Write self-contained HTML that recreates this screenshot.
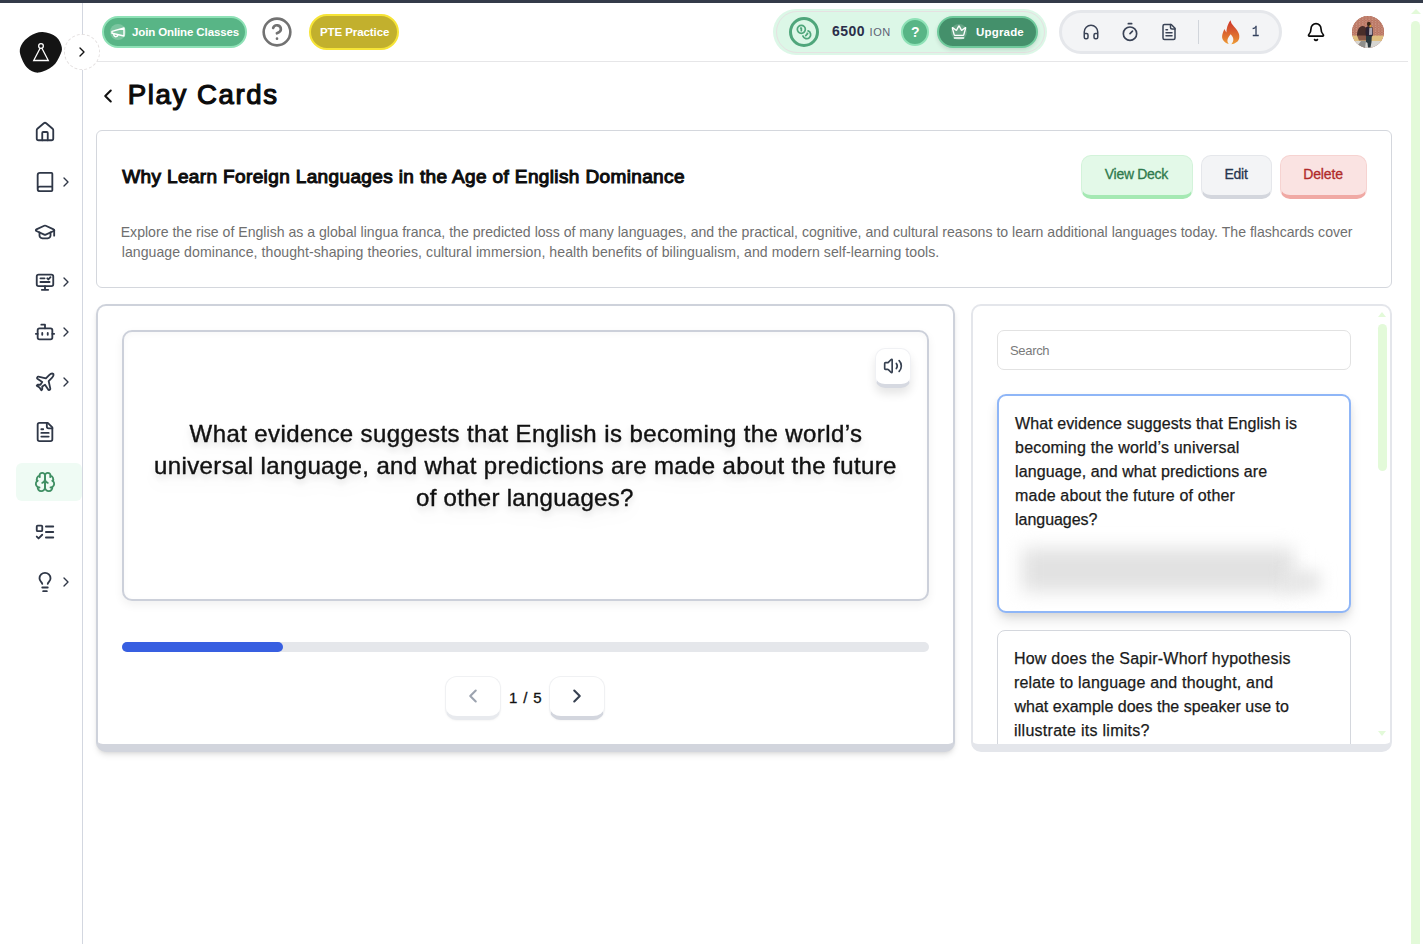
<!DOCTYPE html>
<html lang="en">
<head>
<meta charset="utf-8">
<title>Play Cards</title>
<style>
*{box-sizing:border-box;margin:0;padding:0}
html,body{width:1423px;height:944px;overflow:hidden;background:#fff}
body{position:relative;font-family:"Liberation Sans",sans-serif;color:#111}
.abs{position:absolute}
.t{position:absolute;white-space:nowrap;line-height:1}
svg{display:block;overflow:visible}
.ic{position:absolute;fill:none;stroke:#2f3747;stroke-width:2;stroke-linecap:round;stroke-linejoin:round}
.chev{position:absolute;fill:none;stroke:#2f3747;stroke-width:2;stroke-linecap:round;stroke-linejoin:round;width:16px;height:16px}

/* chrome */
#topbar{left:0;top:0;width:1423px;height:3px;background:#343b49}
#sideline{left:82px;top:3px;width:1px;height:941px;background:#d3d7e0}
#hdrline{left:97px;top:61px;width:1311px;height:1px;background:#e6e6e8}

/* page scrollbar */
#sb-thumb{left:1411px;top:21px;width:9px;height:940px;border-radius:5px;background:#e3fad9}
#sb-up{left:1410.5px;top:9px;width:0;height:0;border-left:5px solid transparent;border-right:5px solid transparent;border-bottom:5px solid #e3fad9}

/* sidebar */
#logo{left:20px;top:32px;width:42px;height:41px}
#toggle{left:64px;top:34px;width:36px;height:36px;border-radius:50%;background:#fff;border:1px dashed #e4e0e0}
#active{left:16px;top:463px;width:66px;height:38px;border-radius:6px;background:#effbf4}

/* topbar */
#join{left:102px;top:16px;width:145px;height:32px;border-radius:16px;background:#58b586;border:2px solid #8fe2b7}
#joinic-bg{left:110px;top:24px;width:16px;height:16px;border-radius:50%;background:rgba(255,255,255,.22)}
#help{left:262px;top:17px;width:30px;height:30px;border-radius:50%;border:2.5px solid #727272}
#pte{left:309px;top:14px;width:90px;height:36px;border-radius:18px;background:#c2b02d;border:2px solid #f6e437}
#ion{left:773px;top:9px;width:274px;height:46px;border-radius:23px;background:#dcf7e7}
#ion-in{left:776px;top:11px;width:269px;height:42px;border-radius:21px;border:1px solid #e6e1e2}
#coin{left:789px;top:17px;width:30px;height:30px;border-radius:50%;border:3px solid #4fa67b}
#ionq{left:901px;top:18px;width:28px;height:28px;border-radius:50%;background:#58b586;border:2px solid #8fe2b7}
#upg{left:937px;top:16px;width:101px;height:32px;border-radius:16px;background:#44906b;border:2px solid #6fca9c;box-shadow:0 2px 4px rgba(0,0,0,.12)}
#upgic-bg{left:951px;top:24px;width:16px;height:16px;border-radius:50%;background:rgba(255,255,255,.18)}
#tools{left:1059px;top:10px;width:223px;height:44px;border-radius:22px;background:#f3f4f6;border:3px solid #e5e7eb}
#tdiv{left:1198px;top:20px;width:1px;height:24px;background:#d1d5db}
#avatar{left:1352px;top:16px;width:32px;height:32px;border-radius:50%;overflow:hidden;background:#a86553}

/* main */
#deck{left:96px;top:130px;width:1296px;height:158px;border:1px solid #d4d7dd;border-radius:6px;background:#fff}
.btn{position:absolute;top:155px;height:44px;border-radius:10px;border-style:solid;border-width:1px 1px 4px 1px}
#b-view{left:1081px;width:112px;background:#e3f9e8;border-color:#d3f3da #d3f3da #a5e9b3 #d3f3da}
#b-edit{left:1201px;width:71px;background:#f3f4f6;border-color:#e5e7eb #e5e7eb #d3d6dd #e5e7eb}
#b-del{left:1280px;width:87px;background:#fae3e2;border-color:#f6d3d1 #f6d3d1 #f0a9a4 #f6d3d1}
#panel{left:96px;top:304px;width:859px;height:448px;border:2px solid #ced2db;border-bottom-width:8px;border-bottom-color:#d2d5dd;border-radius:10px;background:#fff;box-shadow:0 4px 6px -1px rgba(0,0,0,.10),0 2px 4px -2px rgba(0,0,0,.10)}
#card{left:122px;top:330px;width:807px;height:271px;border:2px solid #ccd0da;border-radius:10px;background:#fff;box-shadow:0 4px 10px rgba(0,0,0,.06), inset 0 2px 6px rgba(0,0,0,.03)}
#snd{left:875px;top:348px;width:36px;height:40px;border-radius:10px;background:#fff;border:1px solid #f0f1f4;border-bottom:4px solid #d6d9e1;box-shadow:0 6px 10px rgba(0,0,0,.10)}
.q{position:absolute;white-space:nowrap;line-height:1;font-size:24px;color:#111;-webkit-text-stroke:0.4px #111;filter:drop-shadow(0 10px 8px rgba(0,0,0,.04)) drop-shadow(0 4px 3px rgba(0,0,0,.12))}
#prog{left:122px;top:642px;width:807px;height:10px;border-radius:5px;background:#e5e7eb}
#progf{left:122px;top:642px;width:161px;height:10px;border-radius:5px;background:#385fe1}
.nav{position:absolute;top:676px;width:56px;height:44px;border-radius:12px;background:#fff;border:1px solid #f0f1f3;border-bottom:4px solid #d3d6de;box-shadow:0 1px 2px rgba(0,0,0,.04)}
#rpanel{left:971px;top:304px;width:421px;height:448px;border:2px solid #e4e6eb;border-bottom-width:8px;border-radius:10px;background:#fff;overflow:hidden}
#search{left:997px;top:330px;width:354px;height:40px;border:1px solid #e2e2e2;border-radius:7px;background:#fff}
#sel{left:997px;top:394px;width:354px;height:219px;border:2px solid #8fb6f7;border-radius:9px;background:#fff;box-shadow:0 8px 14px -2px rgba(0,0,0,.13),0 3px 6px rgba(0,0,0,.06)}
#c2{left:997px;top:630px;width:354px;height:130px;border:1px solid #d4d7dd;border-radius:8px;background:#fff}
.li{position:absolute;white-space:nowrap;line-height:1;font-size:15px;color:#1a1a1a;-webkit-text-stroke:0.25px #1a1a1a}
#rp-clip{left:973px;top:306px;width:417px;height:438px;overflow:hidden}
#isb-thumb{left:1378px;top:324px;width:9px;height:147px;border-radius:5px;background:#e3fad9}
#isb-up{left:1378px;top:312px;width:0;height:0;border-left:4.5px solid transparent;border-right:4.5px solid transparent;border-bottom:5px solid #e3fad9}
#isb-dn{left:1378px;top:731px;width:0;height:0;border-left:4.5px solid transparent;border-right:4.5px solid transparent;border-top:5px solid #e3fad9}
.blur{position:absolute;white-space:nowrap;line-height:1;font-size:15px;color:#555;filter:blur(5px)}
</style>
</head>
<body>
<div class="abs" id="topbar"></div>
<div class="abs" id="sideline"></div>
<div class="abs" id="hdrline"></div>
<div class="abs" id="sb-thumb"></div>
<div class="abs" id="sb-up"></div>

<!-- SIDEBAR -->
<div class="abs" id="active"></div>
<svg class="abs" id="logo" viewBox="0 0 42 41"><path d="M22.6 0.0C27.0 0.2 33.1 2.4 36.3 4.9C39.5 7.4 41.2 12.1 41.8 15.2C42.4 18.3 41.3 20.6 39.8 23.7C38.3 26.8 36.4 31.2 32.9 34.0C29.4 36.8 22.9 40.3 18.6 40.6C14.3 40.9 10.2 38.8 7.2 35.8C4.2 32.8 1.3 26.4 0.3 22.6C-0.7 18.8 -0.2 16.0 1.4 12.9C3.0 9.8 6.5 6.2 10.0 4.0C13.5 1.9 18.2 -0.2 22.6 0.0Z" fill="#141414"/><circle cx="21" cy="14" r="2.350" fill="none" stroke="#fff" stroke-width="1.3"/><path d="M20.100 16.300L13.700 28.500H28.300L21.900 16.300" fill="none" stroke="#fff" stroke-width="1.3" stroke-linejoin="miter"/></svg>
<div class="abs" id="toggle"></div>
<svg class="chev" style="left:74px;top:44px;stroke:#111" viewBox="0 0 24 24"><path d="m9 18 6-6-6-6"/></svg>

<!-- SIDEBAR-ICONS -->
<!-- home -->
<svg class="ic" style="left:34px;top:121px;width:22px;height:22px" viewBox="0 0 24 24"><path d="M15 21v-8a1 1 0 0 0-1-1h-4a1 1 0 0 0-1 1v8"/><path d="M3 10a2 2 0 0 1 .709-1.528l7-5.999a2 2 0 0 1 2.582 0l7 5.999A2 2 0 0 1 21 10v9a2 2 0 0 1-2 2H5a2 2 0 0 1-2-2z"/></svg>
<!-- book -->
<svg class="ic" style="left:34px;top:171px;width:22px;height:22px" viewBox="0 0 24 24"><path d="M4 19.5v-15A2.500 2.500 0 0 1 6.500 2H19a1 1 0 0 1 1 1v18a1 1 0 0 1-1 1H6.500a1 1 0 0 1 0-5H20"/></svg>
<svg class="chev" style="left:58px;top:174px" viewBox="0 0 24 24"><path d="m9 18 6-6-6-6"/></svg>
<!-- grad cap -->
<svg class="ic" style="left:34px;top:221px;width:22px;height:22px" viewBox="0 0 24 24"><path d="M21.420 10.922a1 1 0 0 0-.019-1.838L12.830 5.180a2 2 0 0 0-1.660 0L2.600 9.080a1 1 0 0 0 0 1.832l8.570 3.908a2 2 0 0 0 1.660 0z"/><path d="M22 10v6"/><path d="M6 12.500V16a6 3 0 0 0 12 0v-3.500"/></svg>
<!-- monitor -->
<svg class="ic" style="left:34px;top:271px;width:22px;height:22px" viewBox="0 0 24 24"><rect x="3" y="4" width="18" height="12.500" rx="2"/><path d="M12 16.500V20"/><path d="M8.500 20.500h7"/><path d="M7 8h4.500"/><path d="M14.500 8l1.200 1.200 2.300-2.400"/><path d="M7 12h10"/></svg>
<svg class="chev" style="left:58px;top:274px" viewBox="0 0 24 24"><path d="m9 18 6-6-6-6"/></svg>
<!-- bot -->
<svg class="ic" style="left:34px;top:321px;width:22px;height:22px" viewBox="0 0 24 24"><path d="M12 8V4H8"/><rect width="16" height="12" x="4" y="8" rx="2"/><path d="M2 14h2"/><path d="M20 14h2"/><path d="M15 13v2"/><path d="M9 13v2"/></svg>
<svg class="chev" style="left:58px;top:324px" viewBox="0 0 24 24"><path d="m9 18 6-6-6-6"/></svg>
<!-- plane -->
<svg class="ic" style="left:34px;top:371px;width:22px;height:22px" viewBox="0 0 24 24"><path d="M17.800 19.200 16 11l3.500-3.500C21 6 21.500 4 21 3c-1-.5-3 0-4.500 1.500L13 8 4.800 6.200c-.5-.1-.9.100-1.100.500l-.3.500c-.2.500-.1 1 .3 1.300L9 12l-2 3H4l-1 1 3 2 2 3 1-1v-3l3-2 3.500 5.300c.3.400.8.500 1.300.300l.5-.2c.4-.3.600-.7.500-1.200z"/></svg>
<svg class="chev" style="left:58px;top:374px" viewBox="0 0 24 24"><path d="m9 18 6-6-6-6"/></svg>
<!-- file-text -->
<svg class="ic" style="left:34px;top:421px;width:22px;height:22px" viewBox="0 0 24 24"><path d="M15 2H6a2 2 0 0 0-2 2v16a2 2 0 0 0 2 2h12a2 2 0 0 0 2-2V7Z"/><path d="M14 2v4a2 2 0 0 0 2 2h4"/><path d="M10 9H8"/><path d="M16 13H8"/><path d="M16 17H8"/></svg>
<!-- brain -->
<svg class="ic" style="left:34px;top:471px;width:22px;height:22px;stroke:#3f8f63" viewBox="0 0 24 24"><path d="M12 5a3 3 0 1 0-5.997.125 4 4 0 0 0-2.526 5.770 4 4 0 0 0 .556 6.588A4 4 0 1 0 12 18Z"/><path d="M12 5a3 3 0 1 1 5.997.125 4 4 0 0 1 2.526 5.770 4 4 0 0 1-.556 6.588A4 4 0 1 1 12 18Z"/><path d="M15 13a4.500 4.500 0 0 1-3-4 4.500 4.500 0 0 1-3 4"/><path d="M17.599 6.500a3 3 0 0 0 .399-1.375"/><path d="M6.003 5.125A3 3 0 0 0 6.401 6.500"/><path d="M3.477 10.896a4 4 0 0 1 .585-.396"/><path d="M19.938 10.500a4 4 0 0 1 .585.396"/><path d="M6 18a4 4 0 0 1-1.967-.516"/><path d="M19.967 17.484A4 4 0 0 1 18 18"/></svg>
<!-- list-todo -->
<svg class="ic" style="left:34px;top:521px;width:22px;height:22px" viewBox="0 0 24 24"><rect x="3" y="5" width="6" height="6" rx="1"/><path d="m3 17 2 2 4-4"/><path d="M13 6h8"/><path d="M13 12h8"/><path d="M13 18h8"/></svg>
<!-- bulb -->
<svg class="ic" style="left:34px;top:571px;width:22px;height:22px" viewBox="0 0 24 24"><path d="M15 14c.2-1 .7-1.700 1.500-2.500 1-.9 1.500-2.200 1.500-3.500A6 6 0 0 0 6 8c0 1 .2 2.200 1.500 3.500.7.700 1.300 1.500 1.500 2.500"/><path d="M9 18h6"/><path d="M10 22h4"/></svg>
<svg class="chev" style="left:58px;top:574px" viewBox="0 0 24 24"><path d="m9 18 6-6-6-6"/></svg>


<!-- TOPBAR -->
<div class="abs" id="join"></div>
<div class="abs" id="joinic-bg"></div>
<svg class="ic" style="left:110px;top:24px;width:16px;height:16px;stroke:#fff;stroke-width:2.2" viewBox="0 0 24 24"><path d="m3 11 18-5v12L3 14v-3z"/><path d="M11.600 16.800a3 3 0 1 1-5.800-1.600"/></svg>
<div class="t" id="t-join" style="left:132px;top:27px;font-size:11.5px;letter-spacing:-0.12px;font-weight:700;color:#fff">Join Online Classes</div>
<svg class="ic" style="left:261px;top:16px;width:32px;height:32px;stroke:#727272;stroke-width:1.95" viewBox="0 0 24 24"><circle cx="12" cy="12" r="10"/><path d="M9.090 9a3 3 0 0 1 5.830 1c0 2-3 3-3 3"/><path d="M12 17h.01"/></svg>
<div class="abs" id="pte"></div>
<div class="t" id="t-pte" style="left:320px;top:27px;font-size:11.5px;letter-spacing:-0.08px;font-weight:700;color:#fff">PTE Practice</div>

<div class="abs" id="ion"></div>
<div class="abs" id="ion-in"></div>
<div class="abs" id="coin"></div>
<svg class="ic" style="left:796px;top:24px;width:16px;height:16px;stroke:#4fa67b;stroke-width:2.6" viewBox="0 0 24 24"><circle cx="8" cy="8" r="6"/><path d="M18.090 10.370A6 6 0 1 1 10.340 18"/><path d="M7 6h1v4"/><path d="m16.710 13.880.7.710-2.820 2.820"/></svg>
<div class="t" id="t-6500" style="left:832px;top:24px;font-size:14px;letter-spacing:0.45px;font-weight:700;color:#2b2f4a">6500</div>
<div class="t" id="t-ion" style="left:869.5px;top:27px;font-size:11px;letter-spacing:0.6px;color:#5d6275">ION</div>
<div class="abs" id="ionq"></div>
<div class="t" id="t-ionq" style="left:911px;top:25px;font-size:14px;font-weight:700;color:#fff">?</div>
<div class="abs" id="upg"></div>
<div class="abs" id="upgic-bg"></div>
<svg class="ic" style="left:951px;top:24px;width:16px;height:16px;stroke:#fff" viewBox="0 0 24 24"><path d="M11.562 3.266a.5.5 0 0 1 .876 0L15.390 8.870a1 1 0 0 0 1.516.294L21.183 5.500a.5.5 0 0 1 .798.519l-2.834 10.246a1 1 0 0 1-.956.734H5.810a1 1 0 0 1-.957-.734L2.020 6.020a.5.5 0 0 1 .798-.519l4.276 3.664a1 1 0 0 0 1.516-.294z"/><path d="M5 21h14"/></svg>
<div class="t" id="t-upg" style="left:976px;top:27px;font-size:11.5px;letter-spacing:0.18px;font-weight:700;color:#fff">Upgrade</div>

<div class="abs" id="tools"></div>
<svg class="ic" style="left:1082px;top:23px;width:18px;height:18px;stroke:#3a4356" viewBox="0 0 24 24"><path d="M3 14h3a2 2 0 0 1 2 2v3a2 2 0 0 1-2 2H5a2 2 0 0 1-2-2v-7a9 9 0 0 1 18 0v7a2 2 0 0 1-2 2h-1a2 2 0 0 1-2-2v-3a2 2 0 0 1 2-2h3"/></svg>
<svg class="ic" style="left:1120px;top:22px;width:20px;height:20px;stroke:#3a4356" viewBox="0 0 24 24"><line x1="10" x2="14" y1="2" y2="2"/><line x1="12" x2="15" y1="14" y2="11"/><circle cx="12" cy="14" r="8"/></svg>
<svg class="ic" style="left:1160px;top:23px;width:18px;height:18px;stroke:#3a4356" viewBox="0 0 24 24"><path d="M15 2H6a2 2 0 0 0-2 2v16a2 2 0 0 0 2 2h12a2 2 0 0 0 2-2V7Z"/><path d="M14 2v4a2 2 0 0 0 2 2h4"/><path d="M10 9H8"/><path d="M16 13H8"/><path d="M16 17H8"/></svg>
<div class="abs" id="tdiv"></div>
<svg class="abs" id="flame" style="left:1221.9px;top:19.8px;width:17.4px;height:24.4px" viewBox="0 0 17.4 24.4"><defs><linearGradient id="fg" x1="0" y1="0" x2="0" y2="1"><stop offset="0" stop-color="#cf3529"/><stop offset=".4" stop-color="#d7582f"/><stop offset=".75" stop-color="#e27a31"/><stop offset="1" stop-color="#ef9f36"/></linearGradient></defs><path d="M8.500 0.200 C9 2 9.500 3.300 10.400 4.600 C11.300 5.900 12.600 7.100 13.700 8.400 C14.700 9.600 15.600 10.900 16.200 12.200 C16.900 13.500 17.400 14.800 17.300 16.200 C17.300 17.400 17.300 18.400 16.800 19.400 C16.300 20.600 15.500 21.600 14.400 22.300 C13.600 22.900 12.800 23.400 11.900 23.700 C11 24 10.200 24.100 9.300 24.200 C9.900 23.400 10.600 22.500 11 21.400 C11.300 20.400 11.500 19.400 11.200 18.400 C11 17.600 10.700 17 10.200 16.300 C9.800 15.600 9.200 14.900 8.700 14.200 C8 15 7.300 15.800 6.800 16.700 C6.200 17.700 5.700 18.600 5.500 19.700 C5.300 20.600 5.400 21.400 5.700 22.200 C5.900 22.800 6.300 23.300 6.800 23.800 C6.200 23.800 5.600 23.700 5.100 23.500 C4.100 23.100 3.200 22.500 2.500 21.800 C1.700 21.100 1 20.200 0.600 19.300 C0.200 18.300 0 17.300 0.100 16.300 C0.100 15.100 0.400 14 0.800 12.900 C1.200 11.600 1.800 10.400 2.500 9.100 C3 10.400 3.600 11.600 4.400 12.500 C4.400 11.100 4.500 9.700 4.900 8.300 C5.200 6.900 5.500 5.600 6.100 4.400 C6.700 2.900 7.500 1.500 8.500 0.200 Z" fill="url(#fg)"/></svg>
<div class="t" id="t-one" style="transform:scaleX(.8);left:1250.6px;top:25px;font-size:15px;font-family:'Liberation Mono',monospace;color:#33405e;-webkit-text-stroke:0.3px #33405e">1</div>
<svg class="ic" style="left:1306px;top:22px;width:20px;height:20px;stroke:#0a0a0a" viewBox="0 0 24 24"><path d="M10.268 21a2 2 0 0 0 3.464 0"/><path d="M3.262 15.326A1 1 0 0 0 4 17h16a1 1 0 0 0 .74-1.673C19.410 13.956 18 12.499 18 8A6 6 0 0 0 6 8c0 4.499-1.411 5.956-2.738 7.326"/></svg>
<div class="abs" id="avatar"><svg width="32" height="32" viewBox="0 0 32 32"><defs><filter id="avb" x="-10%" y="-10%" width="120%" height="120%"><feGaussianBlur stdDeviation="0.55"/></filter><pattern id="brk" width="3.2" height="2.4" patternUnits="userSpaceOnUse"><rect width="3.2" height="2.4" fill="#b8705d"/><rect x="0.4" y="0.3" width="1.5" height="1" fill="#d7ab9a"/><rect x="2" y="1.5" width="1" height=".7" fill="#cf9c8b"/></pattern></defs><g filter="url(#avb)"><rect x="-2" y="-2" width="36" height="23" fill="url(#brk)"/><rect x="-2" y="19.600" width="36" height="6" fill="#e0c080"/><rect x="-2" y="25" width="36" height="9" fill="#d6d5d1"/><path d="M4 32L9 25L14 25L13 32Z" fill="#8f8f8b"/><path d="M5 20C5 13 8 9.500 11 10C13 10.300 14.500 12 14.500 14L14.500 20Z" fill="#4a2d2b"/><path d="M5 19.600H14.500V24.500H7Z" fill="#8a5a48"/><path d="M14 11.500C15 9.800 19 9.800 20.500 11.500L21 19L20 20.500L14 20.500L13.500 16Z" fill="#2b2230"/><path d="M17.300 12L20 11.500L20.300 18.800L17 19Z" fill="#aaa5b2"/><path d="M14 20L19.800 20L19.500 26L18.500 31.500L16 31.500L15.500 27L14 26Z" fill="#2c373c"/><ellipse cx="16.800" cy="8" rx="1.900" ry="2.300" fill="#3a2616"/><path d="M17.500 9.200L19.300 8.800L19.300 11.300L17.500 11.500Z" fill="#d9a32a"/></g></svg></div>


<!-- MAIN -->
<svg class="ic" style="left:97px;top:85px;width:22px;height:22px;stroke:#111;stroke-width:2.3" viewBox="0 0 24 24"><path d="m15 18-6-6 6-6"/></svg>
<div class="t" id="t-title" style="left:127.70px;top:81.00px;font-size:27.6px;font-weight:400;-webkit-text-stroke:1.15px #0b0b0b;color:#0b0b0b;letter-spacing:1.605px">Play Cards</div>

<div class="abs" id="deck"></div>
<div class="t" id="t-deck" style="left:122.20px;top:167.00px;font-size:19px;font-weight:400;-webkit-text-stroke:1.05px #0d0d0d;color:#0d0d0d;letter-spacing:0.371px">Why Learn Foreign Languages in the Age of English Dominance</div>
<div class="t" id="t-d1" style="left:120.70px;top:225.00px;font-size:14.1px;color:#6f6f6f;letter-spacing:0.004px">Explore the rise of English as a global lingua franca, the predicted loss of many languages, and the practical, cognitive, and cultural reasons to learn additional languages today. The flashcards cover</div>
<div class="t" id="t-d2" style="left:121.70px;top:245.00px;font-size:14.1px;color:#6f6f6f;letter-spacing:0.058px">language dominance, thought-shaping theories, cultural immersion, health benefits of bilingualism, and modern self-learning tools.</div>
<div class="btn" id="b-view"></div><div class="btn" id="b-edit"></div><div class="btn" id="b-del"></div>
<div class="t" id="t-view" style="left:1104.80px;top:167.00px;font-size:14px;-webkit-text-stroke:0.3px #2f7a4d;color:#2f7a4d;letter-spacing:-0.297px">View Deck</div>
<div class="t" id="t-edit" style="left:1224.40px;top:167.00px;font-size:14px;-webkit-text-stroke:0.3px #27364f;color:#27364f;letter-spacing:-0.211px">Edit</div>
<div class="t" id="t-del" style="left:1303.20px;top:167.00px;font-size:14px;-webkit-text-stroke:0.3px #b02a2a;color:#b02a2a;letter-spacing:-0.137px">Delete</div>

<div class="abs" id="panel"></div>
<div class="abs" id="card"></div>
<div class="abs" id="snd"></div>
<svg class="ic" style="left:883px;top:356px;width:20px;height:20px;stroke:#374151" viewBox="0 0 24 24"><path d="M11 4.702a.705.705 0 0 0-1.203-.498L6.413 7.587A1.400 1.400 0 0 1 5.416 8H3a1 1 0 0 0-1 1v6a1 1 0 0 0 1 1h2.416a1.400 1.400 0 0 1 .997.413l3.383 3.384A.705.705 0 0 0 11 19.298z"/><path d="M16 9a5 5 0 0 1 0 6"/><path d="M19.364 18.364a9 9 0 0 0 0-12.728"/></svg>
<div class="q" id="q1" style="left:189.60px;top:422.00px;font-size:24px;letter-spacing:0.399px">What evidence suggests that English is becoming the world’s</div>
<div class="q" id="q2" style="left:154.00px;top:454.00px;font-size:24px;letter-spacing:0.378px">universal language, and what predictions are made about the future</div>
<div class="q" id="q3" style="left:416.00px;top:486.00px;font-size:24px;letter-spacing:0.288px">of other languages?</div>
<div class="abs" id="prog"></div><div class="abs" id="progf"></div>
<div class="nav" style="left:445px;border-bottom-color:#e8eaee"></div>
<div class="nav" style="left:549px"></div>
<svg class="ic" style="left:462px;top:685px;width:22px;height:22px;stroke:#9ca3af;stroke-width:2.3" viewBox="0 0 24 24"><path d="m15 18-6-6 6-6"/></svg>
<svg class="ic" style="left:566px;top:685px;width:22px;height:22px;stroke:#374151;stroke-width:2.3" viewBox="0 0 24 24"><path d="m9 18 6-6-6-6"/></svg>
<div class="t" id="t-pg" style="left:509.00px;top:690.00px;font-size:15px;-webkit-text-stroke:0.3px #111;color:#111;letter-spacing:0.864px">1 / 5</div>

<div class="abs" id="rpanel"></div>
<div class="abs" id="rp-clip"><div style="position:absolute;left:-973px;top:-306px;width:1423px;height:944px">
<div class="abs" id="search"></div>
<div class="t" id="t-search" style="left:1010.00px;top:344.00px;font-size:13px;color:#7a7a7a;letter-spacing:-0.332px">Search</div>
<div class="abs" id="sel"></div>
<div class="li" id="l1" style="left:1015.00px;top:416.00px;font-size:16px;letter-spacing:0.098px">What evidence suggests that English is</div>
<div class="li" id="l2" style="left:1015.10px;top:440.00px;font-size:16px;letter-spacing:0.199px">becoming the world’s universal</div>
<div class="li" id="l3" style="left:1015.10px;top:464.00px;font-size:16px;letter-spacing:0.089px">language, and what predictions are</div>
<div class="li" id="l4" style="left:1015.10px;top:488.00px;font-size:16px;letter-spacing:0.154px">made about the future of other</div>
<div class="li" id="l5" style="left:1015.10px;top:512.00px;font-size:16px;letter-spacing:-0.049px">languages?</div>
<div class="abs" style="left:1022px;top:548px;width:272px;height:44px;background:#e2e2e2;filter:blur(9px)"></div>
<div class="abs" style="left:1286px;top:571px;width:34px;height:21px;background:#e4e4e4;filter:blur(8px)"></div>
<div class="abs" id="c2"></div>
<div class="li" id="m1" style="left:1013.90px;top:651.00px;font-size:16px;letter-spacing:0.236px">How does the Sapir-Whorf hypothesis</div>
<div class="li" id="m2" style="left:1013.90px;top:675.00px;font-size:16px;letter-spacing:0.195px">relate to language and thought, and</div>
<div class="li" id="m3" style="left:1014.40px;top:699.00px;font-size:16px;letter-spacing:0.016px">what example does the speaker use to</div>
<div class="li" id="m4" style="left:1013.90px;top:723.00px;font-size:16px;letter-spacing:0.276px">illustrate its limits?</div>
</div></div>
<div class="abs" id="isb-thumb"></div><div class="abs" id="isb-up"></div><div class="abs" id="isb-dn"></div>


</body>
</html>
